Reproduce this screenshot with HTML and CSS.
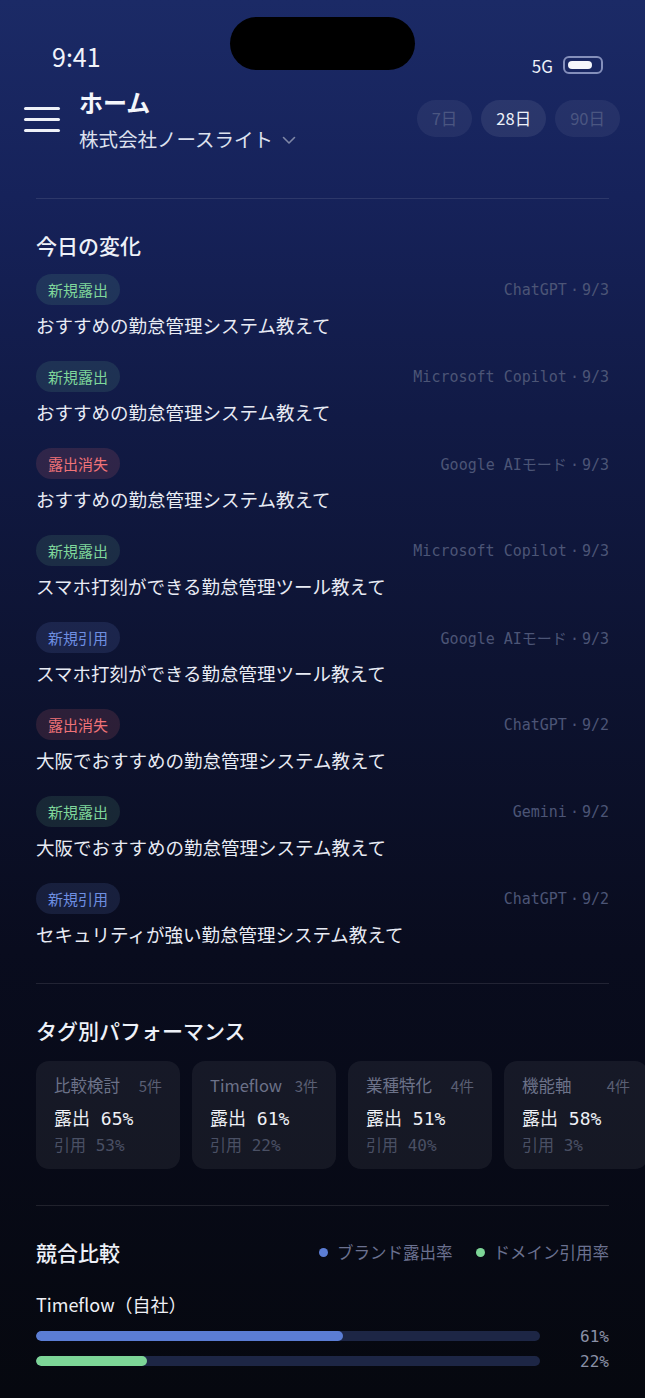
FILE: index.html
```html
<!DOCTYPE html>
<html lang="ja">
<head>
    <meta charset="UTF-8">
    <meta name="viewport" content="width=device-width, initial-scale=1.0">
    <title>ホーム</title>
    <link rel="stylesheet" href="styles.css">
</head>
<body>
    <div class="status">
        <div class="time">9:41</div>
        <div class="island"></div>
        <div class="status-right">
            <span class="net">5G</span>
            <span class="battery"><span class="battery-fill"></span></span>
        </div>
    </div>

    <header class="header">
        <div class="burger"><span></span><span></span><span></span></div>
        <div class="titles">
            <div class="title">ホーム</div>
            <div class="company">株式会社ノースライト
                <svg class="chev" width="14" height="9" viewBox="0 0 14 9"><path d="M1.5 1.5 L7 7 L12.5 1.5" fill="none" stroke="#7f87a6" stroke-width="1.6" stroke-linecap="round" stroke-linejoin="round"/></svg>
            </div>
        </div>
        <div class="range">
            <span class="pill">7日</span>
            <span class="pill active">28日</span>
            <span class="pill">90日</span>
        </div>
    </header>

    <main class="main">
        <hr class="rule">

        <section class="section">
            <h2>今日の変化</h2>
            <div class="changes">
                <div class="change">
                    <div class="change-top"><span class="badge green">新規露出</span><span class="meta">ChatGPT<span class="dot">·</span>9/3</span></div>
                    <div class="query">おすすめの勤怠管理システム教えて</div>
                </div>
                <div class="change">
                    <div class="change-top"><span class="badge green">新規露出</span><span class="meta">Microsoft Copilot<span class="dot">·</span>9/3</span></div>
                    <div class="query">おすすめの勤怠管理システム教えて</div>
                </div>
                <div class="change">
                    <div class="change-top"><span class="badge red">露出消失</span><span class="meta">Google AIモード<span class="dot">·</span>9/3</span></div>
                    <div class="query">おすすめの勤怠管理システム教えて</div>
                </div>
                <div class="change">
                    <div class="change-top"><span class="badge green">新規露出</span><span class="meta">Microsoft Copilot<span class="dot">·</span>9/3</span></div>
                    <div class="query">スマホ打刻ができる勤怠管理ツール教えて</div>
                </div>
                <div class="change">
                    <div class="change-top"><span class="badge blue">新規引用</span><span class="meta">Google AIモード<span class="dot">·</span>9/3</span></div>
                    <div class="query">スマホ打刻ができる勤怠管理ツール教えて</div>
                </div>
                <div class="change">
                    <div class="change-top"><span class="badge red">露出消失</span><span class="meta">ChatGPT<span class="dot">·</span>9/2</span></div>
                    <div class="query">大阪でおすすめの勤怠管理システム教えて</div>
                </div>
                <div class="change">
                    <div class="change-top"><span class="badge green">新規露出</span><span class="meta">Gemini<span class="dot">·</span>9/2</span></div>
                    <div class="query">大阪でおすすめの勤怠管理システム教えて</div>
                </div>
                <div class="change">
                    <div class="change-top"><span class="badge blue">新規引用</span><span class="meta">ChatGPT<span class="dot">·</span>9/2</span></div>
                    <div class="query">セキュリティが強い勤怠管理システム教えて</div>
                </div>
            </div>
        </section>

        <hr class="rule">

        <section class="section">
            <h2>タグ別パフォーマンス</h2>
        </section>
        <div class="cards">
            <div class="card">
                <div class="card-head"><span>比較検討</span><span class="count">5件</span></div>
                <div class="card-exp">露出 65%</div>
                <div class="card-cite">引用 53%</div>
            </div>
            <div class="card">
                <div class="card-head"><span>Timeflow</span><span class="count">3件</span></div>
                <div class="card-exp">露出 61%</div>
                <div class="card-cite">引用 22%</div>
            </div>
            <div class="card">
                <div class="card-head"><span>業種特化</span><span class="count">4件</span></div>
                <div class="card-exp">露出 51%</div>
                <div class="card-cite">引用 40%</div>
            </div>
            <div class="card">
                <div class="card-head"><span>機能軸</span><span class="count">4件</span></div>
                <div class="card-exp">露出 58%</div>
                <div class="card-cite">引用 3%</div>
            </div>
        </div>

        <hr class="rule">

        <section class="section">
            <div class="compare-head">
                <h2>競合比較</h2>
                <div class="legend">
                    <span class="legend-item"><i class="ldot blue"></i>ブランド露出率</span>
                    <span class="legend-item"><i class="ldot green"></i>ドメイン引用率</span>
                </div>
            </div>
            <div class="brand">Timeflow（自社）</div>
            <div class="bar-row">
                <div class="track"><div class="fill blue" style="width: 61%"></div></div>
                <span class="val">61%</span>
            </div>
            <div class="bar-row second">
                <div class="track"><div class="fill green" style="width: 22%"></div></div>
                <span class="val">22%</span>
            </div>
        </section>
    </main>
</body>
</html>
```

FILE: styles.css
```css
* {
    margin: 0;
    padding: 0;
    box-sizing: border-box;
}

html, body {
    width: 645px;
    min-height: 1398px;
    overflow: hidden;
}

body {
    font-family: "Noto Sans CJK JP", "Noto Sans", sans-serif;
    color: #e8ebf4;
    background: linear-gradient(180deg, #1b2a66 0%, #16225a 14%, #111a45 30%, #0d1331 48%, #090c1e 68%, #06080f 100%);
}

/* status bar */
.status {
    height: 86px;
    display: grid;
    grid-template-columns: 1fr auto 1fr;
    align-items: start;
}

.time {
    padding-left: 52px;
    margin-top: 41px;
    font-size: 25px;
    line-height: 30px;
    font-weight: 400;
    color: #f2f4fa;
}

.island {
    width: 185px;
    height: 53px;
    margin-top: 17px;
    border-radius: 27px;
    background: #000;
}

.status-right {
    display: flex;
    justify-content: flex-end;
    align-items: center;
    gap: 10px;
    padding-right: 42px;
    margin-top: 55px;
    height: 20px;
}

.net {
    font-size: 17px;
    font-weight: 400;
    color: #eef1f8;
}

.battery {
    width: 40px;
    height: 18px;
    border: 2px solid rgba(190, 200, 235, 0.65);
    border-radius: 6px;
    display: flex;
    align-items: center;
    padding-left: 3px;
}

.battery-fill {
    width: 24px;
    height: 8px;
    border-radius: 4px;
    background: #f4f6fb;
}

/* header */
.header {
    height: 67px;
    display: flex;
    align-items: center;
    padding: 0 25px 0 24px;
}

.burger {
    width: 36px;
    display: flex;
    flex-direction: column;
    gap: 8px;
}

.burger span {
    height: 3px;
    border-radius: 2px;
    background: #eef1f8;
}

.titles {
    margin-left: 19px;
    flex: 1;
}

.title {
    font-size: 24px;
    line-height: 32px;
    font-weight: 700;
    color: #f4f6fb;
}

.company {
    margin-top: 7px;
    font-size: 19.5px;
    line-height: 28px;
    color: #dde1ee;
    display: flex;
    align-items: center;
}

.chev {
    margin-left: 9px;
    margin-top: 2px;
}

.range {
    display: flex;
    gap: 9px;
    margin-top: -2px;
}

.pill {
    height: 37px;
    padding: 0 15px;
    border-radius: 19px;
    background: rgba(255, 255, 255, 0.06);
    font-size: 16.5px;
    line-height: 37px;
    color: #4b5681;
}

.pill.active {
    color: #eef1f8;
    background: rgba(255, 255, 255, 0.08);
}

/* main */
.main {
    padding: 0 36px;
}

.rule {
    border: 0;
    height: 1px;
    background: rgba(255, 255, 255, 0.1);
}

.main > .rule:first-child {
    margin-top: 45px;
}

.section {
    padding-top: 32px;
}

.section h2 {
    font-size: 21px;
    line-height: 28px;
    font-weight: 500;
    color: #eef1f8;
}

.changes {
    margin-top: 15px;
    padding-bottom: 36px;
    display: flex;
    flex-direction: column;
    gap: 23px;
}

.change-top {
    height: 31px;
    display: flex;
    justify-content: space-between;
    align-items: center;
}

.badge {
    height: 31px;
    padding: 0 12px;
    border-radius: 16px;
    font-size: 15px;
    line-height: 31px;
    font-weight: 400;
}

.badge.green {
    color: #7fd79b;
    background: rgba(127, 215, 155, 0.12);
}

.badge.red {
    color: #f07378;
    background: rgba(240, 115, 120, 0.14);
}

.badge.blue {
    color: #6e8fe2;
    background: rgba(110, 143, 226, 0.14);
}

.meta {
    font-family: "DejaVu Sans Mono", "Noto Sans CJK JP", monospace;
    font-size: 15px;
    color: #4c5576;
}

.meta .dot {
    margin: 0 3px;
}

.query {
    margin-top: 7px;
    font-size: 18.5px;
    line-height: 26px;
    color: #e8ebf4;
}

/* tag cards */
.cards {
    margin: 17px -36px 0 0;
    padding-bottom: 36px;
    display: flex;
    gap: 12px;
    overflow: hidden;
}

.card {
    flex: 0 0 144px;
    height: 108px;
    padding: 13px 18px;
    border-radius: 13px;
    background: rgba(255, 255, 255, 0.06);
}

.card-head {
    display: flex;
    justify-content: space-between;
    align-items: baseline;
    font-size: 16.5px;
    line-height: 22px;
    color: #6c7289;
}

.card-head .count {
    font-size: 15px;
    color: #5a5f74;
}

.card-exp {
    margin-top: 9px;
    font-family: "DejaVu Sans Mono", "Noto Sans CJK JP", monospace;
    font-size: 18px;
    line-height: 26px;
    color: #eef0f5;
}

.card-cite {
    margin-top: 3px;
    font-family: "DejaVu Sans Mono", "Noto Sans CJK JP", monospace;
    font-size: 16px;
    line-height: 22px;
    color: #4a5064;
}

/* comparison */
.compare-head {
    display: flex;
    justify-content: space-between;
    align-items: center;
}

.legend {
    display: flex;
    gap: 23px;
    font-size: 16.5px;
    color: #6b7190;
}

.legend-item {
    display: flex;
    align-items: center;
    gap: 9px;
}

.ldot {
    width: 9px;
    height: 9px;
    border-radius: 50%;
}

.ldot.blue,
.fill.blue {
    background: #5b7dd4;
}

.ldot.green,
.fill.green {
    background: #7dd597;
}

.brand {
    margin-top: 25px;
    font-size: 18px;
    line-height: 26px;
    color: #eef0f5;
}

.bar-row {
    margin-top: 8px;
    height: 22px;
    display: flex;
    align-items: center;
}

.bar-row.second {
    margin-top: 3px;
}

.track {
    width: 504px;
    height: 10px;
    border-radius: 5px;
    background: #1d2645;
    overflow: hidden;
}

.fill {
    height: 100%;
    border-radius: 5px;
}

.val {
    flex: 1;
    text-align: right;
    font-family: "DejaVu Sans Mono", "Noto Sans CJK JP", monospace;
    font-size: 16px;
    color: #8a90a6;
}
```
